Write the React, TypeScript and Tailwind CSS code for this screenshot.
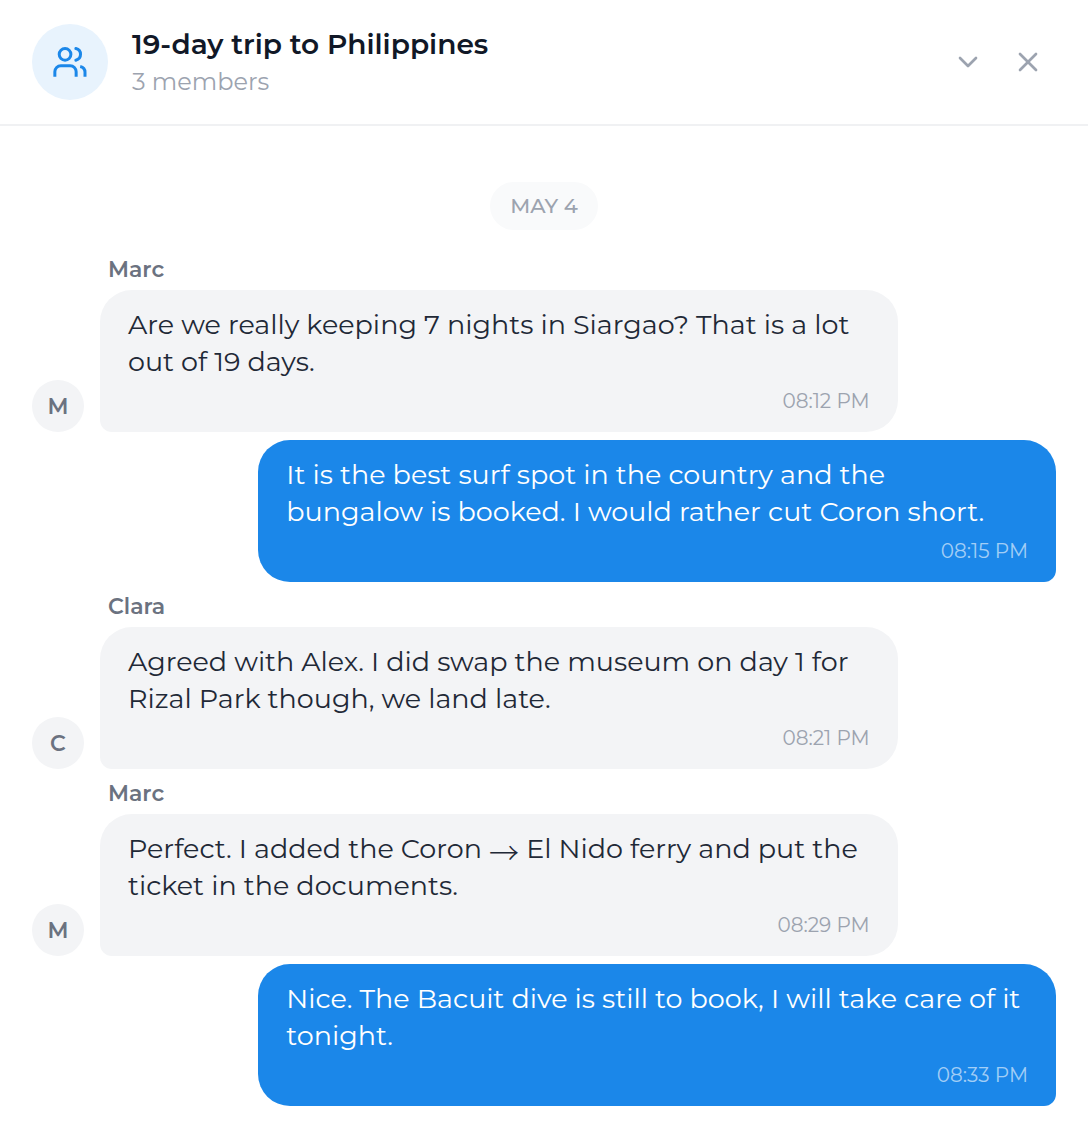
import type { ReactNode } from "react";
import { ChevronDown, X } from "lucide-react";

type Message = {
  author?: string;
  text: ReactNode;
  time: string;
};

const messages: Message[] = [
  {
    author: "Marc",
    text: "Are we really keeping 7 nights in Siargao? That is a lot out of 19 days.",
    time: "08:12 PM",
  },
  {
    text: "It is the best surf spot in the country and the bungalow is booked. I would rather cut Coron short.",
    time: "08:15 PM",
  },
  {
    author: "Clara",
    text: "Agreed with Alex. I did swap the museum on day 1 for Rizal Park though, we land late.",
    time: "08:21 PM",
  },
  {
    author: "Marc",
    text: (
      <>
        Perfect. I added the Coron{" "}
        <span className="inline-block align-middle font-['Noto_Sans_CJK_SC',sans-serif] text-[30px] leading-7 font-light">
          →
        </span>{" "}
        El Nido ferry and put the ticket in the documents.
      </>
    ),
    time: "08:29 PM",
  },
  {
    text: "Nice. The Bacuit dive is still to book, I will take care of it tonight.",
    time: "08:33 PM",
  },
];

function MembersIcon() {
  return (
    <svg
      viewBox="0 0 24 24"
      className="size-9 text-[#1b87e9]"
      fill="none"
      stroke="currentColor"
      strokeWidth="2"
      aria-hidden="true"
    >
      <circle cx="8.7" cy="6.9" r="3.9" />
      <path d="M15.9 3a4 4 0 0 1 0 7.8" strokeLinecap="round" />
      <path d="M1.9 21.8v-3.3a4 4 0 0 1 4-4h6.2a4 4 0 0 1 4 4v3.3" />
      <path d="M18.8 15a4 4 0 0 1 3.2 3.9v2.9" />
    </svg>
  );
}

function Received({ author, text, time }: Message) {
  return (
    <li className="flex items-end gap-4">
      <span
        aria-hidden="true"
        className="flex size-[52px] shrink-0 items-center justify-center rounded-full bg-[#f3f4f6] text-[22px] font-semibold text-[#6b7280]"
      >
        {author?.charAt(0)}
      </span>
      <div className="-mr-[68px] w-full">
        <p className="mb-1 pl-2 text-[22px] leading-[33px] font-semibold text-[#6b7280]">{author}</p>
        <div className="w-fit max-w-[calc(78%-1px)] rounded-[32px] rounded-bl-xl bg-[#f3f4f6] px-7 py-4">
          <p className="pr-1 text-[27px] leading-[37px] text-[#1f2937]">{text}</p>
          <p className="mt-1.5 text-right text-[20px] leading-[30px] text-[#9ca3af]">{time}</p>
        </div>
      </div>
    </li>
  );
}

function Sent({ text, time }: Message) {
  return (
    <li className="flex justify-end">
      <div className="max-w-[calc(78%-1px)] rounded-[32px] rounded-br-xl bg-[#1b87e9] px-7 py-4">
        <p className="pr-1 text-[27px] leading-[37px] text-white">{text}</p>
        <p className="mt-1.5 text-right text-[20px] leading-[30px] text-white/60">{time}</p>
      </div>
    </li>
  );
}

export default function App() {
  return (
    <div className="min-h-screen bg-white font-['Montserrat','Inter',sans-serif]">
      <header className="flex items-center gap-6 border-b-2 border-[#f0f1f3] px-8 py-6">
        <div className="flex size-[76px] shrink-0 items-center justify-center rounded-full bg-[#e8f3fd]">
          <MembersIcon />
        </div>
        <div className="min-w-0 flex-1">
          <h1 className="text-[28px] leading-10 font-semibold text-[#111827]">19-day trip to Philippines</h1>
          <p className="text-[24px] leading-9 text-[#9ca3af]">3 members</p>
        </div>
        <div className="flex gap-1 text-[#9ca3af]">
          <button type="button" aria-label="Collapse" className="flex size-14 items-center justify-center">
            <ChevronDown className="size-8" />
          </button>
          <button type="button" aria-label="Close" className="flex size-14 items-center justify-center">
            <X className="size-8" />
          </button>
        </div>
      </header>
      <main className="px-8 pt-14 pb-10">
        <p className="mx-auto mb-[23px] w-fit rounded-full bg-[#f9fafb] px-5 text-[21px] leading-[48px] font-medium text-[#9ca3af]">
          MAY 4
        </p>
        <ul className="flex flex-col gap-2">
          {messages.map((message) =>
            message.author ? (
              <Received key={message.time} {...message} />
            ) : (
              <Sent key={message.time} {...message} />
            ),
          )}
        </ul>
      </main>
    </div>
  );
}
